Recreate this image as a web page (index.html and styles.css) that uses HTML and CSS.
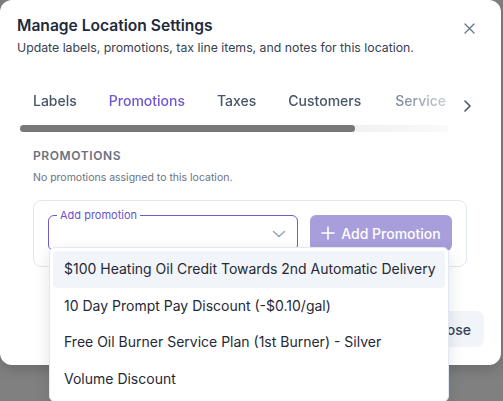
FILE: index.html
```html
<!DOCTYPE html>
<html>
<head>
<meta charset="utf-8">
<link rel="stylesheet" href="styles.css">
</head>
<body>
<div class="backdrop">
  <div class="modal">
    <div class="header">
      <div class="titles">
        <h2 class="title">Manage Location Settings</h2>
        <p class="subtitle">Update labels, promotions, tax line items, and notes for this location.</p>
      </div>
      <button class="close-x" aria-label="Close">
        <svg width="11" height="11" viewBox="0 0 11 11"><path d="M1 1L10 10M10 1L1 10" stroke="#64748b" stroke-width="1.3" stroke-linecap="round"/></svg>
      </button>
    </div>

    <div class="tabs-wrap">
      <div class="tabs-scroll">
        <div class="tabs">
          <span class="tab">Labels</span>
          <span class="tab active">Promotions</span>
          <span class="tab">Taxes</span>
          <span class="tab">Customers</span>
          <span class="tab">Service</span>
        </div>
        <div class="track"><div class="thumb"></div></div>
      </div>
      <button class="tab-next" aria-label="Next">
        <svg width="10" height="14" viewBox="0 0 10 14"><path d="M3 2L8 7L3 12" fill="none" stroke="#475569" stroke-width="1.6" stroke-linecap="round" stroke-linejoin="round"/></svg>
      </button>
    </div>

    <div class="section">
      <div class="section-title">PROMOTIONS</div>
      <div class="section-empty">No promotions assigned to this location.</div>
      <div class="card">
        <div class="select">
          <span class="legend">Add promotion</span>
          <svg class="chev" width="14" height="8" viewBox="0 0 14 8"><path d="M1.5 1.5L7 6.5L12.5 1.5" fill="none" stroke="#94a3b8" stroke-width="1.5" stroke-linecap="round" stroke-linejoin="round"/></svg>
          <ul class="menu">
            <li class="item hl">$100 Heating Oil Credit Towards 2nd Automatic Delivery</li>
            <li class="item">10 Day Prompt Pay Discount (-$0.10/gal)</li>
            <li class="item">Free Oil Burner Service Plan (1st Burner) - Silver</li>
            <li class="item">Volume Discount</li>
          </ul>
        </div>
        <button class="add-btn">
          <svg width="14" height="14" viewBox="0 0 14 14"><path d="M7 1V13M1 7H13" stroke="#fff" stroke-width="1.6" stroke-linecap="round"/></svg>
          <span>Add Promotion</span>
        </button>
      </div>
    </div>

    <div class="footer">
      <button class="close-btn">Close</button>
    </div>
  </div>
</div>
</body>
</html>
```

FILE: styles.css
```css
* { box-sizing: border-box; }
html, body { margin: 0; padding: 0; }
body {
  width: 503px;
  height: 401px;
  overflow: hidden;
  background: #808080;
  font-family: Inter, "Noto Sans", sans-serif;
}
.backdrop {
  width: 503px;
  height: 401px;
}
.modal {
  position: relative;
  width: 501px;
  height: 365px;
  background: #fff;
  border-radius: 12px;
  box-shadow: 0 4px 14px rgba(0,0,0,0.18);
  display: flex;
  flex-direction: column;
}
.header {
  display: flex;
  justify-content: space-between;
  padding: 15px 26px 0 17px;
}
.title {
  margin: 0;
  font-size: 15.6px;
  line-height: 22px;
  font-weight: 600;
  color: #1e293b;
}
.subtitle {
  margin: 2px 0 0;
  font-size: 12.3px;
  line-height: 18px;
  color: #374151;
}
.close-x {
  border: 0;
  background: none;
  padding: 0;
  margin-top: 8px;
  width: 11px;
  height: 11px;
  display: flex;
}
.tabs-wrap {
  display: flex;
  align-items: flex-start;
  margin-top: 34px;
  padding-left: 17px;
}
.tabs-scroll {
  width: 431px;
  display: flex;
  flex-direction: column;
}
.tabs {
  display: flex;
  white-space: nowrap;
  overflow: hidden;
  -webkit-mask-image: linear-gradient(to right, #000 85%, rgba(0,0,0,0.35) 100%);
  mask-image: linear-gradient(to right, #000 85%, rgba(0,0,0,0.35) 100%);
}
.tab {
  padding: 0 16px;
  font-size: 14px;
  line-height: 20px;
  font-weight: 500;
  color: #475569;
}
.tab:nth-child(5) { padding-left: 18px; }
.tab.active { color: #7256d3; }
.tab:last-child { color: #64748b; }
.track {
  margin: 14px 0 0 3px;
  height: 7px;
  width: 428px;
  border-radius: 4px 0 0 4px;
  background: linear-gradient(to right, #f0f0f0 75%, #f3f3f3 85%, #fafafa 100%);
}
.thumb {
  width: 335px;
  height: 7px;
  border-radius: 4px;
  background: #787878;
}
.tab-next {
  border: 0;
  background: none;
  padding: 0;
  margin: 8px 0 0 14px;
  width: 10px;
  height: 14px;
  display: flex;
}
.section {
  padding: 16px 34px 0 33px;
}
.section-title {
  font-size: 12px;
  line-height: 16px;
  font-weight: 600;
  letter-spacing: 0.6px;
  color: #6b7280;
}
.section-empty {
  margin-top: 6px;
  font-size: 10.5px;
  line-height: 15px;
  color: #6b7280;
}
.card {
  margin-top: 15px;
  border: 1px solid #e2e8f0;
  border-radius: 8px;
  padding: 14px 14px 14px 14px;
  display: flex;
  gap: 12px;
  height: 67px;
}
.select {
  position: relative;
  width: 250px;
  height: 36px;
  border: 1px solid #6f5bd0;
  border-radius: 6px;
}
.legend {
  position: absolute;
  left: 8px;
  top: -9px;
  padding: 0 3px;
  background: #fff;
  font-size: 11px;
  line-height: 16px;
  color: #6a52c9;
}
.chev {
  position: absolute;
  right: 11px;
  top: 14px;
}
.add-btn {
  width: 142px;
  height: 36px;
  border: 0;
  border-radius: 6px;
  background: #a89edb;
  color: #fff;
  font-family: inherit;
  font-size: 14px;
  font-weight: 500;
  display: flex;
  align-items: center;
  justify-content: center;
  gap: 6px;
  padding: 0 8px 0 8px;
}
.menu {
  position: absolute;
  left: 0;
  top: 31px;
  width: 400px;
  margin: 0;
  padding: 3px 3px;
  list-style: none;
  background: #fff;
  border: 1px solid #e2e8f0;
  border-radius: 6px;
  box-shadow: 0 6px 16px rgba(15,23,42,0.12);
  z-index: 5;
}
.item {
  padding: 8px 11px;
  line-height: 20.7px;
  font-size: 14px;
  color: #1f2937;
  border-radius: 4px;
  white-space: nowrap;
}
.item.hl { background: #f1f4f9; }
.footer {
  margin-top: auto;
  display: flex;
  justify-content: flex-end;
  padding: 0 17px 18px 0;
}
.close-btn {
  height: 36px;
  padding: 0 13px;
  border: 0;
  border-radius: 8px;
  background: #f1f4f9;
  color: #334155;
  font-family: inherit;
  font-size: 14px;
  font-weight: 500;
}
```
